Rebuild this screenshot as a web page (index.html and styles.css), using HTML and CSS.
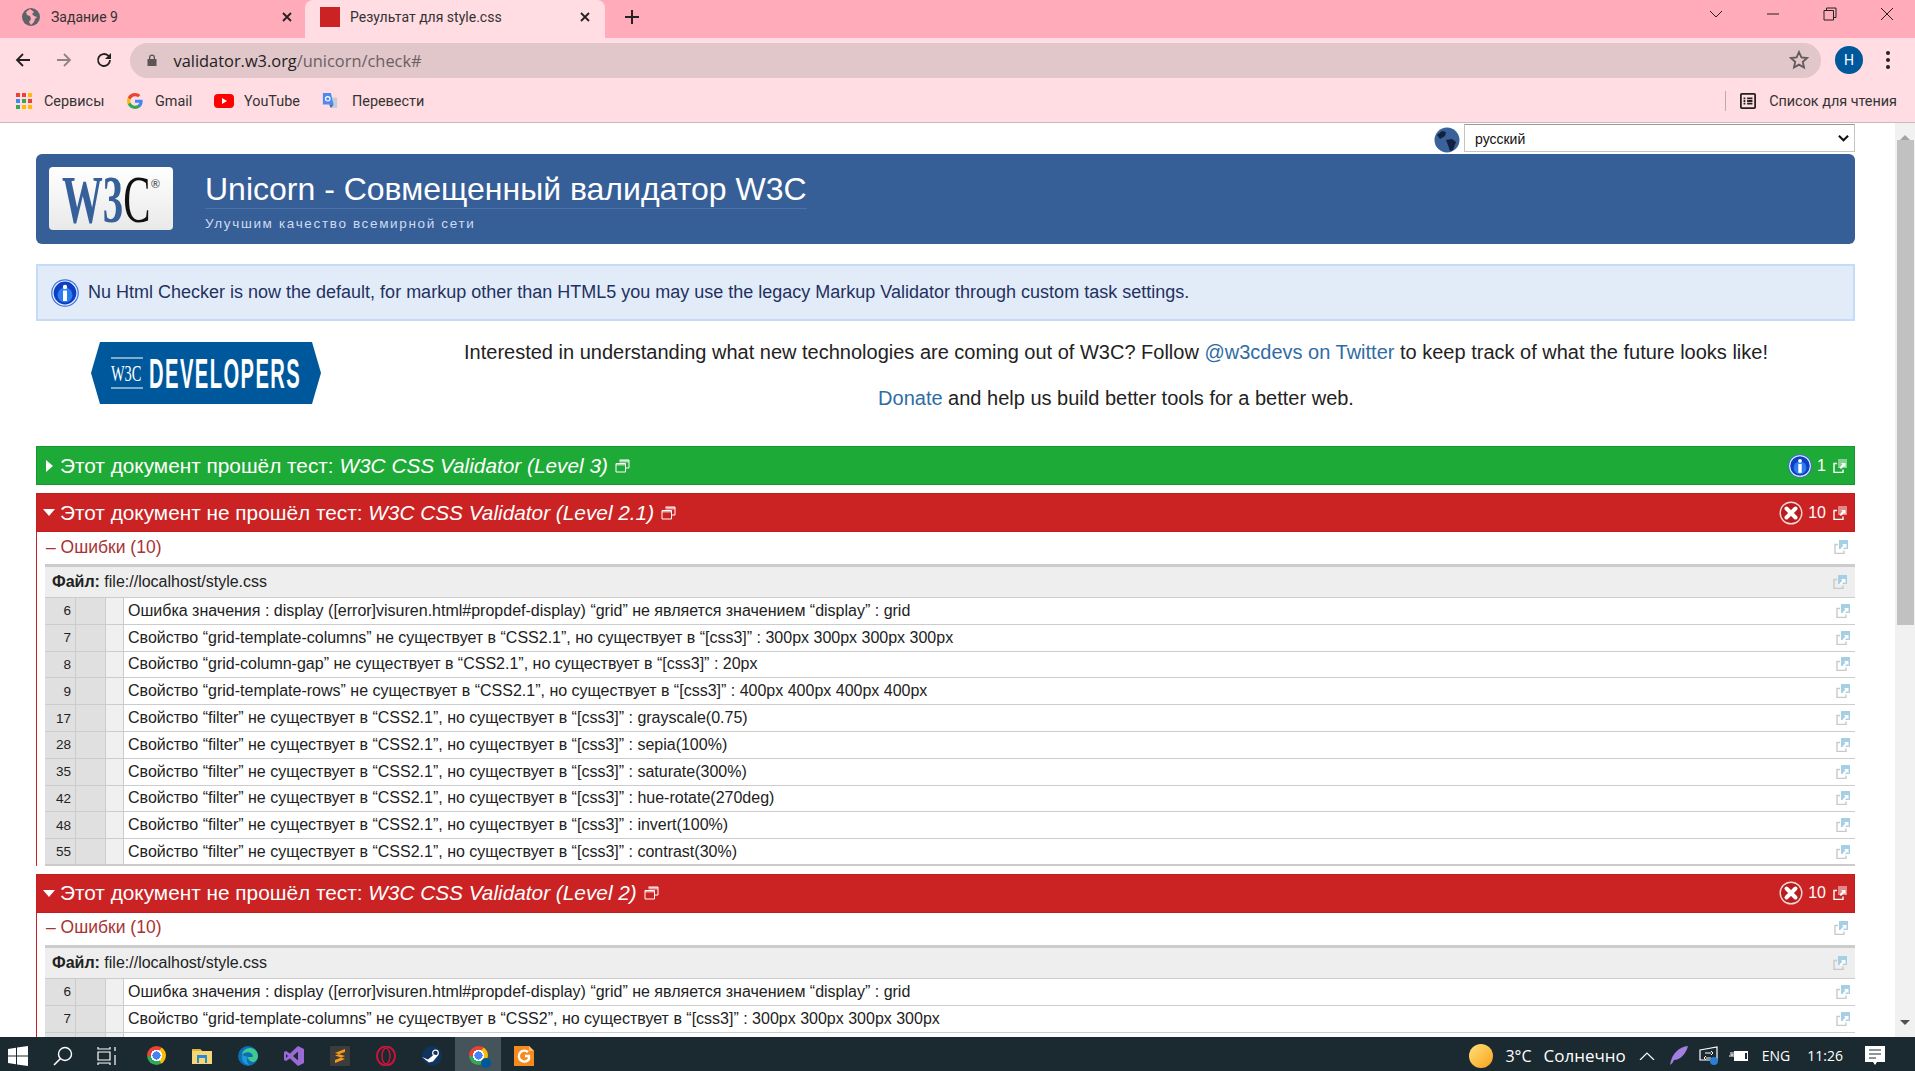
FILE: index.html
```html
<!DOCTYPE html>
<html lang="ru">
<head>
    <meta charset="UTF-8">
    <title>Результат для style.css</title>
    <link rel="stylesheet" href="styles.css">
</head>
<body>

<svg class="defs" width="0" height="0">
    <symbol id="ext" viewBox="0 0 14 14">
        <path d="M4 4.500H1v9h9v-3" fill="none" stroke="currentColor" stroke-width="1.400"/>
        <path d="M5 0h9v9H5z"/>
        <path d="M6.500 8.500l3-3-1.500-1.500h4.500v4.500l-1.500-1.500-3 3z" fill="#fff"/>
    </symbol>
    <symbol id="popup" viewBox="0 0 14 14">
        <path d="M4 1h9.500v8H10" fill="none" stroke="currentColor" stroke-width="1"/>
        <path d="M4 1h9.500v2.500H4z" opacity=".6"/>
        <path d="M.5 4.500h9.500v8.500H.5z" fill="none" stroke="currentColor" stroke-width="1"/>
        <path d="M.5 4.500h9.500v2H.5z" opacity=".6"/>
    </symbol>
    <symbol id="info" viewBox="0 0 28 28">
        <circle cx="14" cy="14" r="13.800" fill="#3b6fe0"/>
        <circle cx="14" cy="14" r="12.600" fill="#eef3fd"/>
        <circle cx="14" cy="14" r="11.400" fill="#0d3fc2"/>
        <circle cx="14" cy="16" r="7.500" fill="#2a7cf0"/>
        <circle cx="14" cy="8" r="2.200" fill="#fff"/>
        <rect x="12" y="11.500" width="4" height="10.500" fill="#fff"/>
    </symbol>
    <symbol id="err" viewBox="0 0 24 24">
        <circle cx="12" cy="12" r="10.800" fill="#b81c1c" stroke="#f5d8d8" stroke-width="1.400"/>
        <path d="M7.500 7.500l9 9M16.500 7.500l-9 9" stroke="#fff" stroke-width="4" stroke-linecap="round"/>
    </symbol>
</svg>

<div class="tabstrip">
    <div class="tab">
        <svg class="fav" viewBox="0 0 20 20"><circle cx="10" cy="10" r="9" fill="#5f6368"/><path d="M9 2l-4 3 1 3 3 1 1 3-2 3 2 3 3-3 1-3 2-2-3-1-2-2 2-2z" fill="#ffabb9"/></svg>
        <span class="tab-title">Задание 9</span>
        <svg class="tab-close" viewBox="0 0 10 10"><path d="M1 1l8 8M9 1l-8 8"/></svg>
    </div>
    <div class="tab tab-active">
        <span class="fav-red"></span>
        <span class="tab-title">Результат для style.css</span>
        <svg class="tab-close" viewBox="0 0 10 10"><path d="M1 1l8 8M9 1l-8 8"/></svg>
    </div>
    <svg class="tab-new" viewBox="0 0 14 14"><path d="M7 0v14M0 7h14"/></svg>
    <div class="win-controls">
        <svg class="win-btn" viewBox="0 0 14 14"><path d="M1 4l6 6 6-6"/></svg>
        <svg class="win-btn" viewBox="0 0 14 14"><path d="M1 7h12"/></svg>
        <svg class="win-btn" viewBox="0 0 14 14"><path d="M1 3.500h9.500V13H1zM3.500 3.500V1H13v9.500h-2.500"/></svg>
        <svg class="win-btn" viewBox="0 0 14 14"><path d="M1 1l12 12M13 1L1 13"/></svg>
    </div>
</div>

<div class="toolbar">
    <svg class="nav-icon" viewBox="0 0 16 16"><path d="M15 8H2M8 2L2 8l6 6"/></svg>
    <svg class="nav-icon nav-off" viewBox="0 0 16 16"><path d="M1 8h13M8 2l6 6-6 6"/></svg>
    <svg class="nav-icon" viewBox="0 0 16 16"><path d="M14 8a6 6 0 1 1-1.800-4.300L14 5.500"/><path class="nav-fill" d="M15 1v6H9z"/></svg>
    <div class="omnibox">
        <svg class="lock" viewBox="0 0 10 12"><path d="M2 5V3.500a3 3 0 0 1 6 0V5h1.500v7H.5V5zM3.300 5h3.400V3.500a1.700 1.700 0 0 0-3.400 0z"/></svg>
        <span class="url"><b>validator.w3.org</b>/unicorn/check#</span>
        <svg class="star" viewBox="0 0 20 20"><path d="M10 2l2.400 5.400 5.600.6-4.200 3.800 1.200 5.700L10 14.600l-5 2.900 1.200-5.700L2 8l5.600-.6z"/></svg>
    </div>
    <span class="avatar">H</span>
    <span class="menu-dots"><i></i><i></i><i></i></span>
</div>

<div class="bookmarks">
    <span class="bm bm-apps">
        <svg class="bm-icon" viewBox="0 0 16 16">
            <rect x="0" y="0" width="4" height="4" fill="#ea4335"/><rect x="6" y="0" width="4" height="4" fill="#ea4335"/><rect x="12" y="0" width="4" height="4" fill="#fbbc05"/>
            <rect x="0" y="6" width="4" height="4" fill="#4285f4"/><rect x="6" y="6" width="4" height="4" fill="#34a853"/><rect x="12" y="6" width="4" height="4" fill="#ea4335"/>
            <rect x="0" y="12" width="4" height="4" fill="#34a853"/><rect x="6" y="12" width="4" height="4" fill="#fbbc05"/><rect x="12" y="12" width="4" height="4" fill="#fbbc05"/>
        </svg>
        Сервисы
    </span>
    <span class="bm bm-gmail">
        <svg class="bm-icon" viewBox="0 0 24 24">
            <path fill="#4285F4" d="M23.490 12.270c0-.790-.070-1.540-.190-2.270H12v4.510h6.470c-.290 1.480-1.140 2.730-2.400 3.580v3h3.860c2.260-2.090 3.560-5.170 3.560-8.820z"/>
            <path fill="#34A853" d="M12 24c3.240 0 5.950-1.080 7.930-2.910l-3.860-3c-1.080.720-2.450 1.160-4.070 1.160-3.130 0-5.780-2.110-6.730-4.960H1.290v3.090C3.260 21.300 7.310 24 12 24z"/>
            <path fill="#FBBC05" d="M5.270 14.290c-.250-.720-.380-1.490-.380-2.290s.140-1.570.380-2.290V6.620H1.290C.470 8.240 0 10.060 0 12s.470 3.760 1.290 5.380l3.980-3.090z"/>
            <path fill="#EA4335" d="M12 4.750c1.770 0 3.350.610 4.600 1.800l3.420-3.420C17.950 1.190 15.240 0 12 0 7.310 0 3.260 2.700 1.290 6.620l3.980 3.090c.950-2.850 3.600-4.960 6.730-4.960z"/>
        </svg>
        Gmail
    </span>
    <span class="bm bm-yt">
        <svg class="bm-icon bm-icon-wide" viewBox="0 0 20 14"><rect width="20" height="14" rx="4" fill="#f00"/><path d="M8 4l5 3-5 3z" fill="#fff"/></svg>
        YouTube
    </span>
    <span class="bm bm-tr">
        <svg class="bm-icon" viewBox="0 0 18 18"><path d="M8 5h9v12H10z" fill="#c6cdd8"/><path d="M1 0h9l3 13H1z" fill="#4d8af0"/><path d="M8 13h5l-3 4z" fill="#3367c8"/><circle cx="6.500" cy="6.500" r="2.500" fill="none" stroke="#fff" stroke-width="1.300"/></svg>
        Перевести
    </span>
    <span class="bm-spacer"></span>
    <span class="bm-sep"></span>
    <span class="bm bm-read">
        <svg class="bm-icon" viewBox="0 0 18 18"><rect x="1" y="1" width="16" height="16" rx="1" fill="none" stroke="#222" stroke-width="2"/><path d="M4 5h2v2H4zM8 5h6v2H8zM4 8h2v2H4zM8 8h6v2H8zM4 11h2v2H4zM8 11h6v2H8z" fill="#222"/></svg>
        Список для чтения
    </span>
</div>

<div class="page">
    <main class="content">
        <div class="lang-row">
            <svg class="globe" viewBox="0 0 26 26"><circle cx="13" cy="13" r="12.500" fill="#3a6199"/><path d="M3 8l5-4 4 1-1 4-5 3zM12 13l6-1 4 3-3 8-3 1-2-6z" fill="#12213f"/></svg>
            <select class="lang-select"><option>русский</option></select>
        </div>

        <header class="banner">
            <svg class="w3c-logo" viewBox="0 0 124 63">
                <defs><linearGradient id="logoBg" x1="0" y1="0" x2="0" y2="1"><stop offset="0" stop-color="#fff"/><stop offset="1" stop-color="#e9e9e9"/></linearGradient></defs>
                <rect width="124" height="63" rx="4" fill="url(#logoBg)"/>
                <text transform="translate(13 55) scale(.6 1)" font-family="Liberation Serif" font-weight="bold" font-size="68" fill="#36609a">W3<tspan font-weight="normal" fill="#111">C</tspan></text>
                <text x="102" y="21" font-family="Liberation Sans" font-size="12" font-weight="bold" fill="#666">®</text>
            </svg>
            <div class="banner-text">
                <h1 class="banner-title">Unicorn - Совмещенный валидатор W3C</h1>
                <p class="banner-sub">Улучшим качество всемирной сети</p>
            </div>
        </header>

        <div class="notice">
            <svg class="notice-icon"><use href="#info"/></svg>
            <span>Nu Html Checker is now the default, for markup other than HTML5 you may use the legacy Markup Validator through custom task settings.</span>
        </div>

        <section class="promo">
            <div class="promo-logo">
                <svg class="dev-logo" viewBox="0 0 230 62">
                    <path d="M9 0h212l9 31-9 31H9L0 31z" fill="#00589c"/>
                    <path d="M20 16h32M20 46h32" stroke="#fff" stroke-width="1"/>
                    <text transform="translate(20 39) scale(.6 1)" font-family="Liberation Serif" font-size="24" fill="#fff">W3C</text>
                    <text transform="translate(58 46) scale(.48 1)" font-family="Liberation Sans" font-weight="bold" font-size="42" letter-spacing="3" fill="#fff">DEVELOPERS</text>
                </svg>
            </div>
            <div class="promo-text">
                <p>Interested in understanding what new technologies are coming out of W3C? Follow <a href="#">@w3cdevs on Twitter</a> to keep track of what the future looks like!</p>
                <p><a href="#">Donate</a> and help us build better tools for a better web.</p>
            </div>
        </section>

        <section class="result">
            <div class="result-bar bar-ok">
                <span class="caret-right"></span>
                <h2 class="result-title">Этот документ прошёл тест: <em>W3C CSS Validator (Level 3)</em></h2>
                <svg class="popup-icon"><use href="#popup"/></svg>
                <svg class="bar-icon"><use href="#info"/></svg>
                <span class="bar-count">1</span>
                <svg class="ext ext-bar"><use href="#ext"/></svg>
            </div>
        </section>

        <section class="result">
            <div class="result-bar bar-fail">
                <span class="caret-down"></span>
                <h2 class="result-title">Этот документ не прошёл тест: <em>W3C CSS Validator (Level 2.1)</em></h2>
                <svg class="popup-icon"><use href="#popup"/></svg>
                <svg class="bar-icon"><use href="#err"/></svg>
                <span class="bar-count">10</span>
                <svg class="ext ext-bar"><use href="#ext"/></svg>
            </div>
            <div class="errors">
                <div class="errors-head"><span>– Ошибки (10)</span><svg class="ext"><use href="#ext"/></svg></div>
                <div class="file-head"><span><b>Файл:</b> file://localhost/style.css</span><svg class="ext"><use href="#ext"/></svg></div>
                <div class="row"><span class="c-line">6</span><span class="c-col"></span><span class="c-mark"></span><span class="c-msg">Ошибка значения : display ([error]visuren.html#propdef-display) “grid” не является значением “display” : grid</span><svg class="ext"><use href="#ext"/></svg></div>
                <div class="row"><span class="c-line">7</span><span class="c-col"></span><span class="c-mark"></span><span class="c-msg">Свойство “grid-template-columns” не существует в “CSS2.1”, но существует в “[css3]” : 300px 300px 300px 300px</span><svg class="ext"><use href="#ext"/></svg></div>
                <div class="row"><span class="c-line">8</span><span class="c-col"></span><span class="c-mark"></span><span class="c-msg">Свойство “grid-column-gap” не существует в “CSS2.1”, но существует в “[css3]” : 20px</span><svg class="ext"><use href="#ext"/></svg></div>
                <div class="row"><span class="c-line">9</span><span class="c-col"></span><span class="c-mark"></span><span class="c-msg">Свойство “grid-template-rows” не существует в “CSS2.1”, но существует в “[css3]” : 400px 400px 400px 400px</span><svg class="ext"><use href="#ext"/></svg></div>
                <div class="row"><span class="c-line">17</span><span class="c-col"></span><span class="c-mark"></span><span class="c-msg">Свойство “filter” не существует в “CSS2.1”, но существует в “[css3]” : grayscale(0.75)</span><svg class="ext"><use href="#ext"/></svg></div>
                <div class="row"><span class="c-line">28</span><span class="c-col"></span><span class="c-mark"></span><span class="c-msg">Свойство “filter” не существует в “CSS2.1”, но существует в “[css3]” : sepia(100%)</span><svg class="ext"><use href="#ext"/></svg></div>
                <div class="row"><span class="c-line">35</span><span class="c-col"></span><span class="c-mark"></span><span class="c-msg">Свойство “filter” не существует в “CSS2.1”, но существует в “[css3]” : saturate(300%)</span><svg class="ext"><use href="#ext"/></svg></div>
                <div class="row"><span class="c-line">42</span><span class="c-col"></span><span class="c-mark"></span><span class="c-msg">Свойство “filter” не существует в “CSS2.1”, но существует в “[css3]” : hue-rotate(270deg)</span><svg class="ext"><use href="#ext"/></svg></div>
                <div class="row"><span class="c-line">48</span><span class="c-col"></span><span class="c-mark"></span><span class="c-msg">Свойство “filter” не существует в “CSS2.1”, но существует в “[css3]” : invert(100%)</span><svg class="ext"><use href="#ext"/></svg></div>
                <div class="row row-last"><span class="c-line">55</span><span class="c-col"></span><span class="c-mark"></span><span class="c-msg">Свойство “filter” не существует в “CSS2.1”, но существует в “[css3]” : contrast(30%)</span><svg class="ext"><use href="#ext"/></svg></div>
            </div>
        </section>

        <section class="result">
            <div class="result-bar bar-fail">
                <span class="caret-down"></span>
                <h2 class="result-title">Этот документ не прошёл тест: <em>W3C CSS Validator (Level 2)</em></h2>
                <svg class="popup-icon"><use href="#popup"/></svg>
                <svg class="bar-icon"><use href="#err"/></svg>
                <span class="bar-count">10</span>
                <svg class="ext ext-bar"><use href="#ext"/></svg>
            </div>
            <div class="errors">
                <div class="errors-head"><span>– Ошибки (10)</span><svg class="ext"><use href="#ext"/></svg></div>
                <div class="file-head"><span><b>Файл:</b> file://localhost/style.css</span><svg class="ext"><use href="#ext"/></svg></div>
                <div class="row"><span class="c-line">6</span><span class="c-col"></span><span class="c-mark"></span><span class="c-msg">Ошибка значения : display ([error]visuren.html#propdef-display) “grid” не является значением “display” : grid</span><svg class="ext"><use href="#ext"/></svg></div>
                <div class="row"><span class="c-line">7</span><span class="c-col"></span><span class="c-mark"></span><span class="c-msg">Свойство “grid-template-columns” не существует в “CSS2”, но существует в “[css3]” : 300px 300px 300px 300px</span><svg class="ext"><use href="#ext"/></svg></div>
                <div class="row"><span class="c-line">8</span><span class="c-col"></span><span class="c-mark"></span><span class="c-msg">Свойство “grid-column-gap” не существует в “CSS2”, но существует в “[css3]” : 20px</span><svg class="ext"><use href="#ext"/></svg></div>
            </div>
        </section>
    </main>

    <div class="scrollbar">
        <span class="sb-up"></span>
        <span class="sb-thumb"></span>
        <span class="sb-track"></span>
        <span class="sb-down"></span>
    </div>
</div>

<footer class="taskbar">
    <svg class="tb-start" viewBox="0 0 20 20"><path d="M0 3l8-1.200V9.500H0zM9 1.600L20 0v9.500H9zM0 10.500h8v7.700L0 17zM9 10.500h11V20L9 18.400z" fill="#fff"/></svg>
    <svg class="tb-search" viewBox="0 0 20 20"><circle cx="12" cy="8" r="6.500" fill="none" stroke="#fff" stroke-width="1.400"/><path d="M7.500 12.500L1 19" stroke="#fff" stroke-width="1.600"/></svg>
    <svg class="tb-view" viewBox="0 0 20 20"><path d="M1 1v2h12V1M1 6h12v8H1zM1 19v-2h12v2M18 1v4M18 9v10" fill="none" stroke="#fff" stroke-width="1.200"/></svg>
    <span class="tb-app"><span class="chrome"></span></span>
    <span class="tb-app">
        <svg class="tb-ico" viewBox="0 0 20 20"><path d="M0 3h8l2 2h10v13H0z" fill="#f7d774"/><path d="M0 3h8l2 2H0z" fill="#e8b23a"/><path d="M5 9h10v8h-2v-5H7v5H5z" fill="#2a8ad4"/></svg>
    </span>
    <span class="tb-app">
        <svg class="tb-ico" viewBox="0 0 20 20"><circle cx="10" cy="10" r="10" fill="#0f6db5"/><path d="M20 10c0-5-4-8-8-8-4 0-8 3-8 7 2-3 7-4 10-1 1 1 1 3 0 3h-4c0 3 3 5 6 5 2-1 4-3 4-6z" fill="#3ecb8f"/><path d="M4 9c-1 5 2 10 8 10-3-2-4-5-2-8z" fill="#1d9ad8"/></svg>
    </span>
    <span class="tb-app">
        <svg class="tb-ico" viewBox="0 0 20 20"><path d="M14 0l6 3v14l-6 3-8-7.500L2 15l-2-1V6l2-1 4 2.500zM14 5.500L9 10l5 4.500zM2 8v4l2-2z" fill="#9b6ad6"/></svg>
    </span>
    <span class="tb-app">
        <svg class="tb-ico" viewBox="0 0 20 20"><rect width="20" height="20" rx="1" fill="#3c3c3c"/><path d="M15 3v3L5 9.500V7zM5 9.500l10 3.500v-3L5 7zM15 10v3L5 17v-3z" fill="#f79b14"/></svg>
    </span>
    <span class="tb-app">
        <svg class="tb-ico" viewBox="0 0 20 20"><ellipse cx="10" cy="10" rx="9" ry="9.500" fill="none" stroke="#c8143c" stroke-width="2"/><ellipse cx="10" cy="10" rx="4" ry="8" fill="none" stroke="#c8143c" stroke-width="1.500"/></svg>
    </span>
    <span class="tb-app">
        <svg class="tb-ico" viewBox="0 0 20 20"><circle cx="10" cy="10" r="10" fill="#10345c"/><path d="M0 11l6 2.500 6-5 4 1-5 6-4 1z" fill="#fff"/><circle cx="13.500" cy="7" r="2.800" fill="none" stroke="#fff" stroke-width="1.200"/></svg>
    </span>
    <span class="tb-app tb-active"><span class="chrome chrome-badged"><span class="chrome-badge"></span></span></span>
    <span class="tb-app">
        <svg class="tb-ico" viewBox="0 0 20 20"><path d="M0 0h15l5 5v15H0z" fill="#f58a1f"/><path d="M15 0l5 5h-5z" fill="#f7c46c"/><path d="M14 6a5.500 5.500 0 1 0 1 7v-3h-4" fill="none" stroke="#fff" stroke-width="2.400"/></svg>
    </span>

    <span class="tb-spacer"></span>

    <span class="tray-sun"></span>
    <span class="tray-text tray-temp">3°C</span>
    <span class="tray-text tray-weather">Солнечно</span>
    <svg class="tray-caret" viewBox="0 0 16 8"><path d="M1 8l7-7 7 7" fill="none" stroke="#fff" stroke-width="1.200"/></svg>
    <svg class="tray-ico tray-feather" viewBox="0 0 20 20"><path d="M19 0C10 1 3 7 1 19c2-1 3-3 4-5 6 0 12-6 14-14z" fill="#a57fe0"/></svg>
    <svg class="tray-ico tray-net" viewBox="0 0 20 20"><path d="M1 4l17-3v13H1z" fill="none" stroke="#fff" stroke-width="1.200"/><path d="M6 7h6M12 5l2 2-2 2M12 12H7M7 10l-2 2 2 2" fill="none" stroke="#fff"/><circle cx="15" cy="15" r="4" fill="#2a7fd4"/></svg>
    <svg class="tray-ico tray-batt" viewBox="0 0 20 14"><rect x="5" y="2" width="14" height="10" fill="#fff"/><rect x="16" y="4" width="2" height="6" fill="#1b2a30"/><path d="M0 7h5M2 3v3h2V3" stroke="#fff" fill="none"/></svg>
    <span class="tray-text tray-lang">ENG</span>
    <span class="tray-text tray-clock">11:26</span>
    <svg class="tray-notif" viewBox="0 0 20 19"><path d="M0 0h20v16h-8l-2 3-2-3H0z" fill="#fff"/><path d="M4 4h12M4 8h12M4 12h7" stroke="#1b2a30"/></svg>
</footer>

</body>
</html>
```

FILE: styles.css
```css
* { box-sizing: border-box; }
html, body { margin: 0; height: 100%; overflow: hidden; }
body { display: flex; flex-direction: column; height: 1071px; background: #fff; font-family: "Liberation Sans", Arial, sans-serif; color: #222; }
.defs { position: absolute; }
h1, h2, p { margin: 0; font-weight: normal; }
a { color: #2f6ca5; text-decoration: none; }

/* browser chrome */
.tabstrip { flex: 0 0 38px; display: flex; align-items: center; background: #ffabb9; font-family: Roboto, sans-serif; font-size: 14px; color: #333; }
.tab { width: 305px; height: 38px; display: flex; align-items: center; padding: 0 13px 5px 21px; }
.tab-active { width: 300px; padding: 0 15px 5px 15px; background: #ffdde3; border-radius: 8px 8px 0 0; }
.fav { width: 20px; height: 20px; margin-right: 10px; }
.fav-red { width: 20px; height: 20px; margin-right: 10px; background: #cb2323; }
.tab-title { flex: 1; white-space: nowrap; }
.tab-close { width: 10px; height: 10px; fill: none; stroke: #222; stroke-width: 1.800; }
.tab-new { width: 14px; height: 14px; margin: -5px 0 0 20px; fill: none; stroke: #222; stroke-width: 2; }
.win-controls { margin-left: auto; display: flex; padding-right: 21px; gap: 43px; }
.win-btn { width: 14px; height: 14px; fill: none; stroke: #222; stroke-width: 1; margin-top: -11px; }

.toolbar { flex: 0 0 44px; display: flex; align-items: center; background: #ffdde3; padding: 0 25px 0 15px; }
.nav-icon { width: 16px; height: 16px; margin-right: 24.500px; fill: none; stroke: #222; stroke-width: 1.800; }
.nav-off { stroke: #8d8486; }
.nav-fill { fill: #222; stroke: none; }
.omnibox { margin-left: -7px; flex: 1; height: 35px; border-radius: 18px; background: #e1c6ca; display: flex; align-items: center; padding: 0 12px 0 17px; }
.lock { width: 10px; height: 12px; fill: #5b5355; margin-right: 17px; }
.url { flex: 1; font-family: "Open Sans", sans-serif; font-size: 16.400px; color: #6a6063; }
.url b { font-weight: normal; color: #222; }
.star { width: 20px; height: 20px; fill: none; stroke: #5f5a5b; stroke-width: 1.800; }
.avatar { width: 28px; height: 28px; margin-left: 14px; border-radius: 50%; background: #00589c; color: #fff; font-family: Roboto, sans-serif; font-size: 14px; display: flex; align-items: center; justify-content: center; }
.menu-dots { display: flex; flex-direction: column; gap: 3px; margin-left: 23px; }
.menu-dots i { width: 4px; height: 4px; border-radius: 50%; background: #222; }

.bookmarks { flex: 0 0 41px; display: flex; align-items: center; background: #ffdde3; border-bottom: 1px solid #c9b9bc; font-family: Roboto, sans-serif; font-size: 14.400px; color: #333; padding: 0 18px 2px 16px; }
.bm { display: flex; align-items: center; white-space: nowrap; }
.bm-icon { width: 16px; height: 16px; margin-right: 12px; }
.bm-icon-wide { width: 20px; height: 14px; margin-right: 10px; }
.bm-apps { width: 111px; }
.bm-gmail { width: 87px; }
.bm-yt { width: 108px; }
.bm-tr .bm-icon { margin-right: 14px; }
.bm-spacer { flex: 1; }
.bm-sep { width: 1px; height: 20px; background: #b9abae; margin-right: 14px; }
.bm-read .bm-icon { margin-right: 13px; }

/* page */
.page { flex: 1; min-height: 0; display: flex; }
.content { flex: 1; min-width: 0; overflow: hidden; padding: 0 40px 0 36px; }
.scrollbar { flex: 0 0 20px; display: flex; flex-direction: column; align-items: center; background: #f1f1f1; }
.sb-up, .sb-down { flex: 0 0 17px; width: 0; border-left: 5px solid transparent; border-right: 5px solid transparent; }
.sb-up { height: 17px; border-bottom: 5px solid #a3a3a3; border-top: 6px solid transparent; }
.sb-down { height: 17px; border-top: 5px solid #505050; }
.sb-thumb { flex: 0 0 485px; width: 17px; background: #c1c1c1; }
.sb-track { flex: 1; }

.lang-row { height: 31px; display: flex; align-items: flex-start; justify-content: flex-end; padding-top: 1px; }
.globe { width: 26px; height: 26px; margin: 3px 4px 0 0; }
.lang-select { appearance: none; width: 391px; height: 28px; padding: 1px 6px 0 10px; border: 1px solid #c4c4c4; border-top-color: #999; border-radius: 0; font-family: "Liberation Sans", sans-serif; font-size: 14px; color: #111; background: #fff url("data:image/svg+xml,%3Csvg xmlns='http://www.w3.org/2000/svg' viewBox='0 0 12 8'%3E%3Cpath d='M1 1.500l5 5 5-5' fill='none' stroke='%23111' stroke-width='2.200'/%3E%3C/svg%3E") no-repeat right 5px center / 11px 8px; }

.banner { height: 90px; display: flex; align-items: flex-start; padding: 13px 0 0 13px; background: #365e97; border-radius: 6px; color: #fff; }
.w3c-logo { width: 124px; height: 63px; }
.banner-text { margin-left: 32px; padding-top: 3px; }
.banner-title { font-size: 32px; line-height: 39px; height: 39px; border-bottom: 1px solid #4d72a6; }
.banner-sub { font-size: 13.500px; letter-spacing: 1.650px; line-height: 29px; color: #cfdcef; }

.notice { height: 57px; margin-top: 20px; display: flex; align-items: center; gap: 9px; padding-left: 13px; background: #e2ecf9; border: 2px solid #c6dbf8; font-size: 18px; color: #24315f; }
.notice-icon { width: 28px; height: 28px; }

.promo { height: 125px; display: flex; }
.promo-logo { flex: 0 0 341px; padding: 21px 0 0 55px; }
.dev-logo { display: block; width: 230px; height: 62px; }
.promo-text { flex: 1; text-align: center; font-size: 20px; color: #222; padding-top: 20px; }
.promo-text p { line-height: 22px; margin-bottom: 24px; }

/* validator results */
.result { margin-bottom: 8px; }
.result-bar { height: 39px; display: flex; align-items: center; padding: 0 7px 0 0; color: #fff; border: 1px solid; }
.bar-ok { background: #1eaa36; border-color: #17962d; }
.bar-fail { background: #cb2323; border-color: #c11f1f; }
.caret-right { margin: 0 7px 0 9px; border-left: 7px solid #fff; border-top: 6px solid transparent; border-bottom: 6px solid transparent; }
.caret-down { margin: 0 5px 0 6px; border-top: 7px solid #fff; border-left: 6px solid transparent; border-right: 6px solid transparent; }
.result-title { font-size: 20.800px; white-space: nowrap; }
.popup-icon { width: 15px; height: 14px; margin: 0 auto 0 7px; color: #fff; fill: #fff; }
.bar-icon { width: 24px; height: 24px; margin-right: 5px; }
.bar-count { font-size: 16px; margin-right: 7px; }
.ext { flex: 0 0 14px; width: 14px; height: 14px; color: #c9c9c9; fill: #a6cfe4; }
.ext-bar { color: #fff; fill: rgba(255, 255, 255, .45); }

.errors { border-left: 1px solid #cb2323; padding-left: 8px; }
.errors-head { height: 32px; display: flex; align-items: center; justify-content: space-between; padding: 0 7px 2px 1px; font-size: 17.500px; color: #a83434; }
.file-head { height: 34px; display: flex; align-items: center; justify-content: space-between; padding: 0 8px 0 7px; background: #eee; border-top: 3px solid #ccc; border-bottom: 1px solid #ccc; font-size: 16px; color: #222; }
.row { height: 26.800px; display: flex; align-items: center; border-bottom: 1px solid #ccc; padding-right: 5px; font-size: 16px; }
.row-last { border-bottom-width: 2px; }
.c-line { flex: 0 0 31px; align-self: stretch; display: flex; align-items: center; justify-content: flex-end; padding-right: 4px; background: #e0e0e0; border-right: 1px solid #ccc; font-size: 13.500px; }
.c-col { flex: 0 0 30px; align-self: stretch; background: #e0e0e0; border-right: 1px solid #ccc; }
.c-mark { flex: 0 0 18px; align-self: stretch; background: #f0f0f0; border-right: 1px solid #ccc; }
.c-msg { flex: 1; padding-left: 4px; white-space: nowrap; }

/* windows taskbar */
.taskbar { flex: 0 0 34px; display: flex; align-items: center; padding-top: 3px; background: #1b2a30; color: #fff; font-family: "Open Sans", sans-serif; font-size: 16px; }
.tb-start { width: 20px; height: 20px; margin-left: 8px; }
.tb-search { width: 20px; height: 20px; margin-left: 25px; }
.tb-view { width: 20px; height: 20px; margin-left: 24px; }
.tb-app { flex: 0 0 46px; height: 34px; margin-top: -3px; padding-top: 3px; display: flex; align-items: center; justify-content: center; }
.tb-app:nth-of-type(1) { margin-left: 16px; }
.tb-active { background: #45545a; }
.tb-ico { width: 20px; height: 20px; }
.chrome { position: relative; width: 19px; height: 19px; border-radius: 50%; background: radial-gradient(circle, #4285f4 0 30%, #fff 31% 42%, transparent 43%), conic-gradient(from -90deg, #ea4335 0 120deg, #fbbc05 120deg 240deg, #34a853 240deg 360deg); }
.chrome-badge { position: absolute; right: -3px; bottom: -3px; width: 10px; height: 10px; border-radius: 50%; background: #00589c; }
.tb-spacer { flex: 1; }
.tray-sun { width: 24px; height: 24px; margin-right: 12px; border-radius: 50%; background: linear-gradient(135deg, #ffe27a, #f9a11b); }
.tray-text { white-space: nowrap; }
.tray-temp { margin-right: 12px; }
.tray-weather { margin-right: 13px; font-size: 17px; }
.tray-caret { width: 16px; height: 8px; margin-right: 14px; }
.tray-ico { width: 20px; height: 20px; margin-right: 10px; }
.tray-batt { height: 14px; }
.tray-lang { margin-left: 3px; font-size: 14px; margin-right: 17px; }
.tray-clock { font-size: 14px; margin-right: 22px; }
.tray-notif { width: 20px; height: 19px; margin-right: 30px; }
```
